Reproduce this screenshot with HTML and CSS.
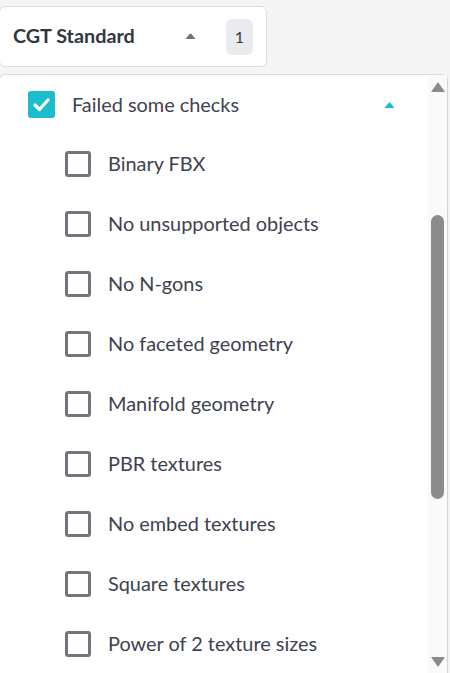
FILE: index.html
```html
<!DOCTYPE html>
<html>
<head>
<meta charset="utf-8">
<link rel="stylesheet" href="styles.css">
</head>
<body>
<div class="header-card">
  <span class="title">CGT Standard</span>
  <svg class="caret" width="11" height="6" viewBox="0 0 11 6"><path d="M0.5 6 L4.5 1 Q5.5 0 6.5 1 L10.5 6 Z" fill="#70747a"/></svg>
  <span class="badge">1</span>
</div>
<div class="panel">
  <div class="list">
    <div class="row parent">
      <span class="cb checked"><svg width="27" height="27" viewBox="0 0 27 27"><path d="M7 14 L11.5 18.5 L20 9" fill="none" stroke="#fff" stroke-width="3.2" stroke-linecap="round" stroke-linejoin="round"/></svg></span>
      <span class="label">Failed some checks</span>
      <svg class="caret-teal" width="11" height="6" viewBox="0 0 11 6"><path d="M0.5 6 L4.5 1 Q5.5 0 6.5 1 L10.5 6 Z" fill="#1bbccb"/></svg>
    </div>
    <div class="row child"><span class="cb"></span><span class="label">Binary FBX</span></div>
    <div class="row child"><span class="cb"></span><span class="label">No unsupported objects</span></div>
    <div class="row child"><span class="cb"></span><span class="label">No N-gons</span></div>
    <div class="row child"><span class="cb"></span><span class="label">No faceted geometry</span></div>
    <div class="row child"><span class="cb"></span><span class="label">Manifold geometry</span></div>
    <div class="row child"><span class="cb"></span><span class="label">PBR textures</span></div>
    <div class="row child"><span class="cb"></span><span class="label">No embed textures</span></div>
    <div class="row child"><span class="cb"></span><span class="label">Square textures</span></div>
    <div class="row child"><span class="cb"></span><span class="label">Power of 2 texture sizes</span></div>
  </div>
  <div class="scrollbar">
    <svg class="arrow" width="14" height="10" viewBox="0 0 14 10"><path d="M0 10 L7 0 L14 10 Z" fill="#8a8a8a"/></svg>
    <div class="thumb-space"><div class="thumb"></div></div>
    <svg class="arrow" width="14" height="10" viewBox="0 0 14 10"><path d="M0 0 L7 10 L14 0 Z" fill="#8a8a8a"/></svg>
  </div>
</div>
</body>
</html>
```
FILE: styles.css
```css
html, body {
  margin: 0;
  padding: 0;
  height: 673px;
  overflow: hidden;
}
body {
  background: #f5f5f5;
  font-family: "Lato", "Source Sans Pro", sans-serif;
  color: #3d4250;
}
.header-card {
  margin-top: 6px;
  margin-left: -1px;
  width: 268px;
  box-sizing: border-box;
  height: 61px;
  background: #fff;
  border: 1px solid #dcdcdc;
  border-radius: 6px;
  display: flex;
  align-items: center;
  padding-left: 13px;
}
.title {
  font-weight: 700;
  font-size: 19.8px;
  color: #333740;
  width: 172px;
  margin-bottom: 3px;
}
.caret {
  display: block;
  margin-top: -1px;
}
.badge {
  margin-left: 30px;
  width: 27px;
  height: 36px;
  border-radius: 6px;
  background: #e9ebee;
  display: flex;
  align-items: center;
  justify-content: center;
  font-size: 16px;
  color: #333740;
}
.panel {
  margin-top: 7px;
  margin-left: -1px;
  width: 449px;
  height: 600px;
  box-sizing: border-box;
  background: #fff;
  border-top: 1px solid #dcdcdc;
  border-right: 1px solid #d4d4d4;
  border-left: 1px solid #dcdcdc;
  border-top-left-radius: 6px;
  border-top-right-radius: 6px;
  display: flex;
}
.list {
  flex: 1;
}
.row {
  display: flex;
  align-items: center;
  height: 60px;
}
.row.parent {
  padding-left: 28px;
  height: 59px;
  padding-right: 33px;
}
.row.child {
  padding-left: 65px;
}
.cb {
  width: 26px;
  height: 26px;
  box-sizing: border-box;
  border: 3px solid #72767c;
  border-radius: 3px;
  flex: none;
}
.cb.checked {
  width: 27px;
  height: 27px;
  border: none;
  background: #1bbccb;
}
.cb svg { display: block; }
.label {
  font-size: 19.9px;
  margin-left: 17px;
  margin-bottom: 2px;
  flex: 1;
}
.caret-teal {
  display: block;
}
.scrollbar {
  width: 19px;
  background: #fafafa;
  display: flex;
  flex-direction: column;
  align-items: center;
  padding: 7px 0 7px 0;
  box-sizing: border-box;
}
.arrow {
  display: block;
  flex: none;
}
.thumb-space {
  flex: 1;
  width: 100%;
  display: flex;
  justify-content: center;
  padding-top: 123px;
  box-sizing: border-box;
}
.thumb {
  width: 13px;
  height: 284px;
  background: #8b8b8b;
  border-radius: 7px;
}
```
